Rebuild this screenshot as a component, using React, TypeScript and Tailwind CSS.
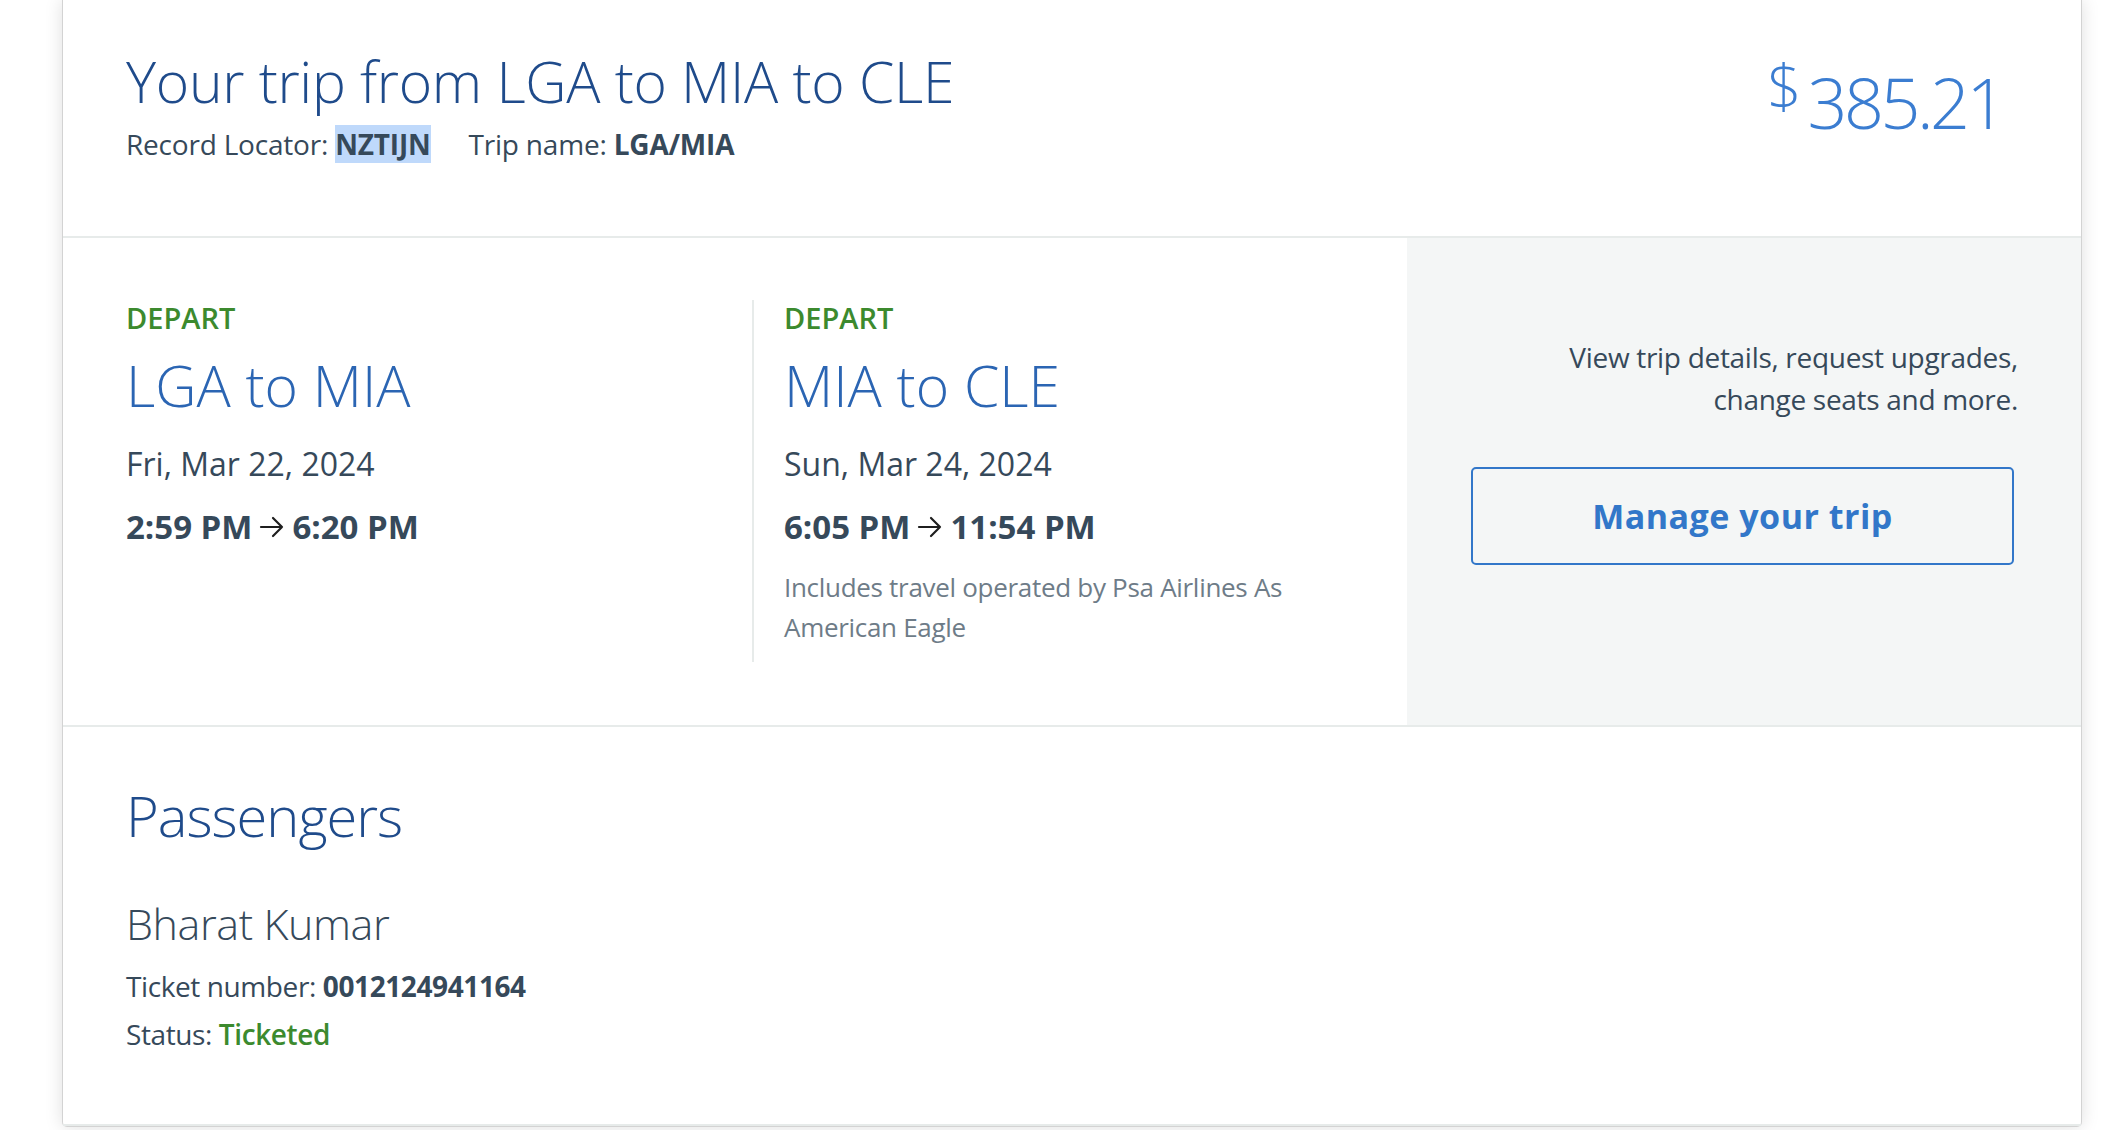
import React from 'react'

const font = { fontFamily: '"Open Sans", "Liberation Sans", sans-serif' }

const Arrow = () => (
  <svg width="28" height="24" viewBox="0 0 28 24" className="mx-[6px] inline-block" aria-hidden="true">
    <path d="M3 12h21M15 3l9 9-9 9" fill="none" stroke="#1f1f1f" strokeWidth="2.2" strokeLinecap="round" strokeLinejoin="round" />
  </svg>
)

const Segment = ({ route, date, dep, arr, note, divider }: { route: string; date: string; dep: string; arr: string; note?: string; divider?: boolean }) => (
  <div className={`${divider ? 'border-l-2 border-l-[#e7ebea] pl-[30px]' : ''} pb-[15px]`}>
    <div className="text-[29px] leading-[36px] font-semibold text-[#3c8a2e]">DEPART</div>
    <div className="mt-[15px] text-[57px] leading-[68px] font-light text-[#2b65b3]">{route}</div>
    <div className="mt-[25px] text-[32px] leading-[40px] font-normal text-[#36495a]">{date}</div>
    <div className="mt-[23px] text-[33px] leading-[40px] font-bold text-[#36495a] flex items-center">
      {dep}<Arrow />{arr}
    </div>
    {note && (
      <p className="mt-[20px] text-[26px] leading-[40px] text-[#6e7c88] w-[560px] tracking-[-0.3px]">{note}</p>
    )}
  </div>
)

const App = () => {
  return (
    <div className="h-[1130px] w-[2106px] overflow-hidden bg-white" style={font}>
      <div className="ml-[62px] w-[2020px] bg-white border-x border-b border-[#d3d3d3] rounded-b-[5px] shadow-[0_0_18px_rgba(0,0,0,0.13)]">

        {/* header */}
        <section className="h-[238px] border-b-2 border-b-[#e7ebea] flex justify-between pl-[63px] pr-[78px]">
          <div className="pt-[45px]">
            <h1 className="text-[57px] leading-[72px] font-light text-[#1f4b8b] tracking-[-0.3px]">
              Your trip from LGA to MIA to CLE
            </h1>
            <div className="mt-[9px] text-[28px] leading-[36px] text-[#36495a] tracking-[-0.2px]">
              Record Locator: <span className="font-bold bg-[#bfd9fb]">NZTIJN</span>
              <span className="ml-[38px]">Trip name: </span><span className="font-bold">LGA/MIA</span>
            </div>
          </div>
          <div className="pt-[62px] flex items-start text-[#3b7dd1] font-light">
            <span className="text-[60px] leading-[60px] -mt-[6px] mr-[6px]">$</span>
            <span className="text-[70px] leading-[80px] tracking-[-3.5px]">385.21</span>
          </div>
        </section>

        {/* segments */}
        <section className="h-[489px] border-b-2 border-b-[#e7ebea] flex">
          <div className="w-[1346px] pl-[63px] pt-[62px] flex items-start">
            <div className="w-[626px]">
              <Segment route="LGA to MIA" date="Fri, Mar 22, 2024" dep="2:59 PM" arr="6:20 PM" />
            </div>
            <div className="w-[620px]">
              <Segment
                divider
                route="MIA to CLE"
                date="Sun, Mar 24, 2024"
                dep="6:05 PM"
                arr="11:54 PM"
                note="Includes travel operated by Psa Airlines As American Eagle"
              />
            </div>
          </div>
          <div className="flex-1 bg-[#f4f6f6] pl-[64px] pr-[63px] pt-[98px] flex flex-col items-end">
            <p className="text-[28px] leading-[42px] text-[#36495a] text-right tracking-[-0.3px]">
              View trip details, request upgrades,<br />change seats and more.
            </p>
            <button className="mt-[47px] mr-[4px] w-[543px] h-[98px] border-2 border-[#3277c9] rounded-[5px] text-[34px] font-bold text-[#3277c9] tracking-[0.5px]">
              Manage your trip
            </button>
          </div>
        </section>

        {/* passengers */}
        <section className="pl-[63px] pt-[56px] pb-[70px] border-b-2 border-b-[#e7ebea]">
          <h2 className="text-[56px] leading-[64px] font-light text-[#1f4b8b] tracking-[-1px]">Passengers</h2>
          <div className="mt-[51px] text-[43px] leading-[52px] font-light text-[#36495a] tracking-[-0.4px]">Bharat Kumar</div>
          <div className="mt-[16px] text-[28px] leading-[40px] text-[#36495a] tracking-[-0.4px]">
            Ticket number: <span className="font-bold">0012124941164</span>
          </div>
          <div className="mt-[8px] text-[28px] leading-[40px] text-[#36495a] tracking-[-0.4px]">
            Status: <span className="font-semibold text-[#3c8a2e]">Ticketed</span>
          </div>
        </section>

      </div>
    </div>
  )
}

export default App
